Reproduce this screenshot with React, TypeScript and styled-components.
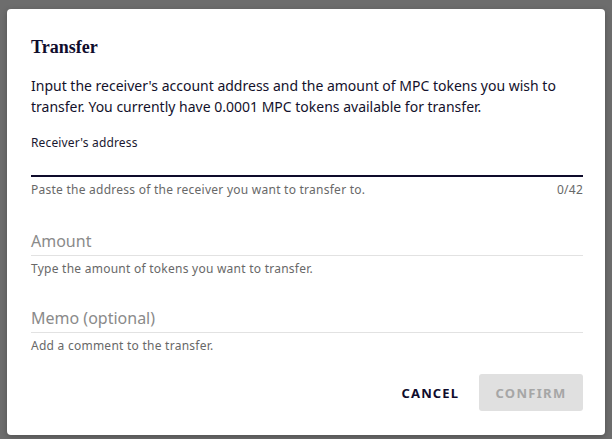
import React from "react";
import styled, { createGlobalStyle } from "styled-components";

const Global = createGlobalStyle`
  html, body { margin: 0; padding: 0; }
  body {
    width: 612px;
    height: 439px;
    overflow: hidden;
    background: #6e6e6e;
    font-family: "Noto Sans", "Open Sans", sans-serif;
  }
`;

const Backdrop = styled.div`
  width: 612px;
  height: 439px;
  box-sizing: border-box;
  padding: 9px 7px 4px 7px;
  background: #6d6d6d;
`;

const Dialog = styled.div`
  width: 598px;
  height: 426px;
  box-sizing: border-box;
  background: #ffffff;
  border-radius: 4px;
  padding: 28px 22px 0 24px;
  display: flex;
  flex-direction: column;
  box-shadow: 0 2px 6px rgba(0, 0, 0, 0.25);
`;

const Title = styled.h2`
  margin: 0;
  font-family: "Liberation Serif", "DejaVu Serif", serif;
  font-weight: 700;
  font-size: 18px;
  line-height: 20px;
  color: #0f0c2c;
`;

const Intro = styled.p`
  margin: 18px 0 0 0;
  font-size: 14px;
  line-height: 21px;
  color: #13112b;
`;

const Field = styled.div<{ $top: number }>`
  margin-top: ${(p) => p.$top}px;
  display: flex;
  flex-direction: column;
`;

const SmallLabel = styled.div`
  font-size: 12px;
  line-height: 16px;
  letter-spacing: 0.15px;
  color: #1a1830;
`;

const InputArea = styled.div<{ $active?: boolean; $height: number }>`
  height: ${(p) => p.$height}px;
  display: flex;
  align-items: flex-end;
  padding-bottom: 4px;
  box-sizing: border-box;
  border-bottom: ${(p) => (p.$active ? "2px solid #0e0b2b" : "1px solid #e2e2e2")};
  font-size: 16px;
  line-height: 20px;
  color: #8a8a8a;
`;

const HelperRow = styled.div`
  display: flex;
  justify-content: space-between;
  margin-top: 5px;
  font-size: 12px;
  line-height: 16px;
  letter-spacing: 0.25px;
  color: #686868;
`;

const Actions = styled.div`
  margin-top: auto;
  margin-bottom: 24px;
  display: flex;
  justify-content: flex-end;
  align-items: center;
  gap: 20px;
`;

const TextButton = styled.button`
  border: none;
  background: transparent;
  padding: 0;
  font-family: "Noto Sans", sans-serif;
  font-weight: 700;
  font-size: 13px;
  letter-spacing: 1.1px;
  color: #0f0c2c;
`;

const FilledButton = styled.button`
  border: none;
  width: 104px;
  height: 37px;
  border-radius: 3px;
  background: #e0e0e0;
  font-family: "Noto Sans", sans-serif;
  font-weight: 700;
  font-size: 13px;
  letter-spacing: 1.3px;
  color: #a6a6a6;
`;

export default function App() {
  return (
    <>
      <Global />
      <Backdrop>
        <Dialog>
          <Title>Transfer</Title>
          <Intro>
            Input the receiver's account address and the amount of MPC tokens you wish to
            transfer. You currently have 0.0001 MPC tokens available for transfer.
          </Intro>
          <Field $top={18}>
            <SmallLabel>Receiver's address</SmallLabel>
            <InputArea $active $height={26} />
            <HelperRow>
              <span>Paste the address of the receiver you want to transfer to.</span>
              <span>0/42</span>
            </HelperRow>
          </Field>
          <Field $top={24}>
            <InputArea $height={34}>Amount</InputArea>
            <HelperRow>
              <span>Type the amount of tokens you want to transfer.</span>
            </HelperRow>
          </Field>
          <Field $top={22}>
            <InputArea $height={34}>Memo (optional)</InputArea>
            <HelperRow>
              <span>Add a comment to the transfer.</span>
            </HelperRow>
          </Field>
          <Actions>
            <TextButton>CANCEL</TextButton>
            <FilledButton>CONFIRM</FilledButton>
          </Actions>
        </Dialog>
      </Backdrop>
    </>
  );
}
